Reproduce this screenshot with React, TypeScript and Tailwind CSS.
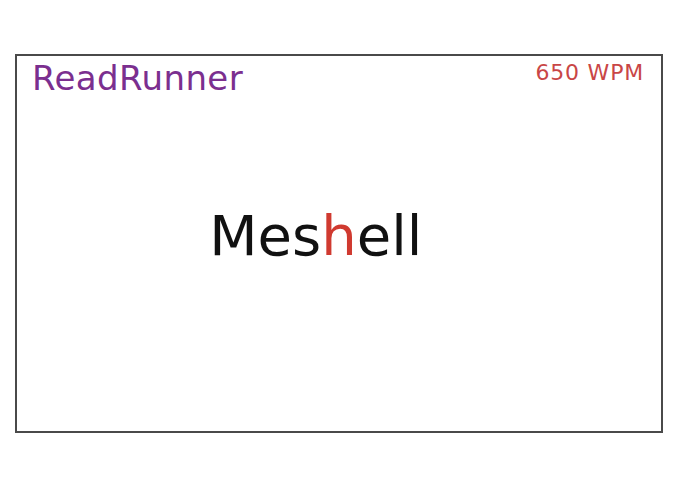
export default function App() {
  const word = "Meshell";
  const pivot = 3;
  return (
    <div className="w-[695px] h-[494px] bg-white pt-[54px] pl-[15px]" style={{ fontFamily: "'DejaVu Sans', sans-serif" }}>
      <div className="w-[648px] h-[379px] border-2 border-[#4a4a4a] flex flex-col">
        <div className="flex justify-between items-start pl-[15px] pr-[17px] pt-[2px]">
          <div className="text-[34px] leading-[40px] tracking-[0.4px] text-[#7b2f8f]">ReadRunner</div>
          <div className="text-[22px] leading-[30px] tracking-[0.8px] text-[#c94646]">650 WPM</div>
        </div>
        <div className="grid grid-cols-[1fr_auto_1fr] items-baseline mt-[106px] text-[56px] leading-[64px] text-[#111]">
          <span className="text-right">{word.slice(0, pivot)}</span>
          <span className="text-[#d03a30]">{word[pivot]}</span>
          <span>{word.slice(pivot + 1)}</span>
        </div>
      </div>
    </div>
  );
}
